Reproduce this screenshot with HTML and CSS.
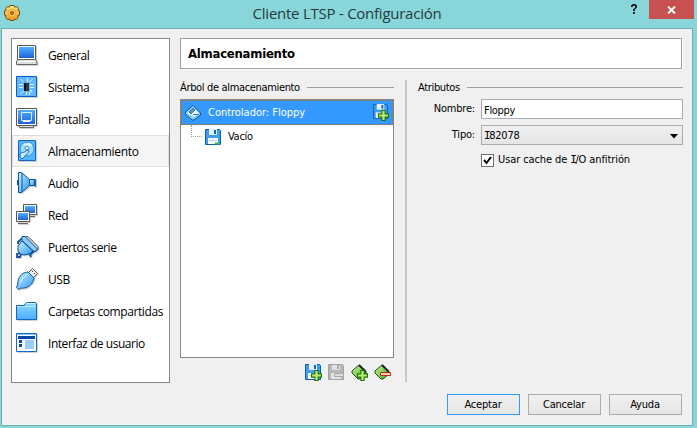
FILE: index.html
```html
<!DOCTYPE html>
<html lang="es">
<head>
<meta charset="utf-8">
<title>Cliente LTSP - Configuración</title>
<link rel="stylesheet" href="styles.css">
</head>
<body>
<svg class="defs" width="0" height="0" aria-hidden="true">
  <defs>
    <linearGradient id="screen" x2="0" y2="1"><stop stop-color="#4eb0ff"/><stop offset="1" stop-color="#1f62dc"/></linearGradient>
    <linearGradient id="sky" x2="1" y2="1"><stop stop-color="#c8f1ff"/><stop offset="1" stop-color="#2d97f3"/></linearGradient>
    <linearGradient id="folder" x2="0" y2="1"><stop stop-color="#8fdcff"/><stop offset="1" stop-color="#48adff"/></linearGradient>
    <linearGradient id="leaf" x2="1" y2="1"><stop stop-color="#c5f59b"/><stop offset="1" stop-color="#3fae1c"/></linearGradient>
    <linearGradient id="gold" x2="0" y2="1"><stop stop-color="#ffe88a"/><stop offset="1" stop-color="#f09a1c"/></linearGradient>
    <symbol id="disk" viewBox="0 0 16 16">
      <path d="M.5.5h14l1 1v14H.5z" fill="#3f9cf0" stroke="#0d5cb4"/>
      <path d="M4 0h8v6H4z" fill="#e2f1fd"/><path d="M9 1h2v4H9z" fill="#1763b5"/>
      <path d="M3 9h10v6H3z" fill="#f4faff"/><path d="M4 11.500h8" stroke="#b3d5ef"/>
    </symbol>
    <symbol id="plus" viewBox="0 0 10 10">
      <path d="M3.500.5h3v3h3v3h-3v3h-3v-3h-3v-3h3z" fill="#b9ee75" stroke="#23720d"/>
    </symbol>
  </defs>
</svg>
<div class="window">
  <header class="titlebar">
    <svg class="gear" width="16" height="16" viewBox="0 0 16 16"><path d="M6 .5h4l.6 1.600 2-.6 1.800 2-.6 2L15.500 6v4l-1.900.8.6 2-1.800 1.700-2-.6-.7 1.600H6.300l-.8-1.600-2.200.5L1.600 12.600l.6-1.800L.5 10V6l1.700-.7-.5-2 1.700-1.700 2 .6z" fill="url(#gold)" stroke="#7a460e" stroke-linejoin="round"/><circle cx="8" cy="8" r="4" fill="#fbc850" stroke="#e39a28" stroke-width=".8"/><circle cx="8" cy="8" r="1.700" fill="#a8762b" stroke="#8a4d0a" stroke-width=".7"/></svg>
    <h1><span>Cliente LTSP - Configuración</span></h1>
    <svg class="help" width="8" height="11" viewBox="0 0 8 11"><path d="M0 1h1V0h4v1h1v3H5v1H4v2H2V5h1V4h1V2H2v1H0zM2 8h2v2H2z" fill="#26292b"/></svg>
    <button class="close" aria-label="Cerrar"><svg width="9" height="8" viewBox="0 0 9 8"><path d="M1 .5l7 7M8 .5l-7 7" stroke="#fff" stroke-width="1.900"/></svg></button>
  </header>
  <main class="client">
    <div class="content">
      <nav class="sidebar">
        <a class="item"><svg width="24" height="24" viewBox="0 0 24 24"><path d="M2.500 2.500h18v14h-18z" fill="#fff" stroke="#555"/><path d="M4 4h15v11H4z" fill="url(#screen)"/><path d="M2.500 16.500h18l1.500 2.500v2.500H1.500V19z" fill="#ddd" stroke="#666"/><path d="M3 18.500h17" stroke="#fff"/></svg><span>General</span></a>
        <a class="item"><svg width="24" height="24" viewBox="0 0 24 24"><path d="M1.500 1.500h20v20h-20z" fill="#62b7fc" stroke="#0862bd"/><path d="M9 8h5v8H9z" fill="#303840"/><path d="M9 8h2v8H9z" fill="#111"/><path d="M4 9.500h4M4 12.500h4M15 9.500h4M15 12.500h4M15 15.500h2M5.500 4l3 3M17.500 4l-3 3M12.500 3v4M5.500 19l3-3M11.500 17v3M14.500 17v3M17.500 18l-2-2" stroke="#e2f4ff"/></svg><span>Sistema</span></a>
        <a class="item"><svg width="24" height="24" viewBox="0 0 24 24"><path d="M1.500 1.500h20v17h-20z" fill="#fff" stroke="#555"/><path d="M3 3h17v14H3z" fill="url(#screen)"/><path d="M6.500 5.500h10v8h-10z" fill="none" stroke="#d9f1ff"/><path d="M8 14.500h7" stroke="#fff"/><path d="M4.500 19v1.500h14V19" fill="#ddd" stroke="#666"/></svg><span>Pantalla</span></a>
        <a class="item selected"><svg width="24" height="24" viewBox="0 0 24 24"><path d="M3.500 1.500h17v20h-17z" fill="#50b5ff" stroke="#1768c2"/><circle cx="12" cy="10" r="7" fill="#9edcff" stroke="#3d8fda"/><path d="M8 5l4 5 5-4-2-2z" fill="#dff5ff"/><circle cx="12" cy="9" r="2" fill="#e6f7ff" stroke="#2e86cf"/><path d="M5 15c2-3 4 0 7-4l2 1c-1 3-3 3-4 5l-3 3-2-2z" fill="#c9edff" stroke="#176abe"/></svg><span>Almacenamiento</span></a>
        <a class="item"><svg width="24" height="24" viewBox="0 0 24 24"><path d="M3.500 1.500h3l8 7v6l-8 7h-3z" fill="url(#sky)" stroke="#0b519c"/><path d="M7 2v19" stroke="#0b519c"/><path d="M14.500 8.500h5v6h-5z" fill="url(#sky)" stroke="#0b519c"/><path d="M2.500 9v5" stroke="#0b519c"/><path d="M20.500 8v8" stroke="#1b66ae"/></svg><span>Audio</span></a>
        <a class="item"><svg width="24" height="24" viewBox="0 0 24 24"><path d="M8.500 1.500h13v10h-13z" fill="#fff" stroke="#555"/><path d="M10 3h10v7H10z" fill="url(#screen)"/><path d="M15 13.500h5" stroke="#666"/><path d="M1.500 8.500h13v10h-13z" fill="#fff" stroke="#555"/><path d="M3 10h10v7H3z" fill="url(#screen)"/><path d="M3 20.500h10" stroke="#666"/></svg><span>Red</span></a>
        <a class="item"><svg width="24" height="24" viewBox="0 0 24 24"><path d="M11 1.500h2l10 10v3l-2 1L9 3z" fill="#ddd" stroke="#555"/><path d="M7 6l11 10-4 3-5 1-4-1-2-3V11z" fill="url(#sky)" stroke="#0c529c"/><path d="M7 1.500h3l12 12-1 3h-2L6.500 5z" fill="#8bcbfa" stroke="#0c529c"/><path d="M7 3.500L3 7v2M5 18l-3 1v3h3l1-3M19 16l-4 4 1 2" fill="none" stroke="#0c529c" stroke-width="1.800"/></svg><span>Puertos serie</span></a>
        <a class="item"><svg width="24" height="24" viewBox="0 0 24 24"><path d="M13.500 5.500l4-4 5 5-4 4z" fill="#eee" stroke="#555"/><path d="M17 4l1 1M19 6l1 1" stroke="#333"/><path d="M13 5c-5 0-9 4-10 9l-.5 4-1 2.500 2 2L6 21c7 1 12-4 13-10z" fill="url(#sky)" stroke="#0a559e"/><path d="M5 16q2-6 8-9" fill="none" stroke="#e0f7ff"/></svg><span>USB</span></a>
        <a class="item"><svg width="24" height="24" viewBox="0 0 24 24"><path d="M1.500 20.500v-14h8v-1l2-2h9l1 1v16z" fill="url(#folder)" stroke="#1267bd"/><path d="M11 4.500h9" stroke="#d9f6ff"/><path d="M2 7.500h19" stroke="#b9ebff"/></svg><span>Carpetas compartidas</span></a>
        <a class="item narrow"><svg width="24" height="24" viewBox="0 0 24 24"><path d="M1.500 2.500h20v18h-20z" fill="#fff" stroke="#106cc6"/><path d="M2 3h19v1H2z" fill="#87c5ff"/><path d="M3 5h17v3H3z" fill="#0848a4"/><path d="M4 9h3v3H4zM4 13h3v3H4z" fill="#0848a4"/><path d="M10 9h9v9h-9z" fill="#9bccff"/></svg><span>Interfaz de usuario</span></a>
      </nav>
      <section class="page">
        <h2 class="heading"><span>Almacenamiento</span></h2>
        <div class="columns">
          <div class="storage">
            <div class="group"><span>Árbol de almacenamiento</span></div>
            <div class="tree">
              <div class="row active">
                <svg width="16" height="16" viewBox="0 0 16 16"><path d="M8 .5L15.500 8v2L9 15H7L.5 9V7z" fill="#8ccbf5" stroke="#0b5197"/><path d="M8 2l6 6-5 4-7-4z" fill="#eefaff"/><path d="M4 7l4-4 2 2-4 4zM8 9.500h6" fill="#4a99d6" stroke="#287ac0"/></svg>
                <span>Controlador: Floppy</span>
                <svg class="add" width="16" height="17" viewBox="0 0 16 17"><use href="#disk" width="15" height="15"/><use href="#plus" x="5" y="6" width="11" height="11"/></svg>
              </div>
              <div class="row child">
                <i class="branch"></i>
                <svg width="16" height="16"><use href="#disk" width="16" height="16"/><path d="M10 14.500h5" stroke="#34c04a" stroke-width="2"/></svg>
                <span class="tight">Vacío</span>
              </div>
            </div>
            <div class="tools">
              <svg width="17" height="17" viewBox="0 0 17 17"><use href="#disk" width="16" height="16"/><use href="#plus" x="6" y="6" width="11" height="11"/></svg>
              <svg width="17" height="17" viewBox="0 0 17 17"><path d="M.5.5h14l1 1v14H.5z" fill="#b7b7b7" stroke="#a2a2a2"/><path d="M4 1h8v5H4zM3 9h10v6H3z" fill="#e2e2e2"/><path d="M9 1h2v4H9z" fill="#aaa"/><path d="M6.500 9.500h9v3h-9z" fill="#ddd" stroke="#aaa"/></svg>
              <svg width="17" height="17" viewBox="0 0 17 17"><path d="M8 1l7 7v2l-6 5H7L1 9V7z" fill="url(#leaf)" stroke="#214d17"/><path d="M8 1l7 7" stroke="#222" stroke-width="2"/><use href="#plus" x="6" y="6" width="11" height="11"/></svg>
              <svg width="17" height="17" viewBox="0 0 17 17"><path d="M8 1l7 7v2l-6 5H7L1 9V7z" fill="url(#leaf)" stroke="#214d17"/><path d="M8 1l7 7" stroke="#222" stroke-width="2"/><path d="M6.500 8.500h10v3h-10z" fill="#ffd3c0" stroke="#c22c0d"/></svg>
            </div>
          </div>
          <div class="divider"></div>
          <form class="attributes">
            <div class="group"><span>Atributos</span></div>
            <div class="field"><label><span>Nombre:</span></label><div class="control input"><span class="tight">Floppy</span></div></div>
            <div class="field"><label><span>Tipo:</span></label><div class="control select"><span class="model"><b>I</b>82078</span><svg width="8" height="5" viewBox="0 0 8 5"><path d="M0 0h8L4 4.500z"/></svg></div></div>
            <div class="check"><i class="box"><svg width="9" height="9" viewBox="0 0 9 9"><path d="M1 4l2.500 3L8 1" fill="none" stroke="#000" stroke-width="2"/></svg></i><span>Usar cache de <b>I</b>/O anfitrión</span></div>
          </form>
        </div>
      </section>
    </div>
    <footer class="actions">
      <button class="default"><span>Aceptar</span></button>
      <button><span>Cancelar</span></button>
      <button><span>Ayuda</span></button>
    </footer>
  </main>
</div>
</body>
</html>
```
FILE: styles.css
```css
* { box-sizing: border-box; }
body { margin: 0; overflow: hidden; background: #88d6da; color: #000; font: 11px/14px "DejaVu Sans Condensed", "DejaVu Sans", sans-serif; font-stretch: condensed; }
span { white-space: nowrap; }
svg { display: block; flex: none; }
/* capital I with serifs */
b { font: 11px/1 "DejaVu Sans Mono", monospace; letter-spacing: -1.5px; }
.defs { position: absolute; }
.window { width: 697px; height: 428px; padding: 0 4px 2px 1px; display: flex; flex-direction: column; }
.titlebar { height: 28px; flex: none; display: grid; grid-template-columns: 29px 1fr 18px 45px; align-items: start; margin-right: -1px; }
.gear { margin: 5px 0 0 3px; }
h1 { margin: 3px 0 0 33px; text-align: center; font: 15px/20px "Open Sans", "Noto Sans", sans-serif; color: #263b3d; letter-spacing: -.25px; }
.help { margin-top: 4px; }
.close { border: 0; height: 19px; width: 45px; padding: 0; background: #c75050; display: flex; align-items: center; justify-content: center; }
.client { height: 398px; width: 692px; border: 1px solid #70b0b3; background: #f0f0f0; padding: 9px 9px 10px 9px; display: flex; flex-direction: column; }
.content { display: flex; height: 345px; gap: 10px; }
.sidebar { width: 159px; border: 1px solid #828790; background: #fff; }
.item { height: 32px; display: flex; align-items: center; gap: 9px; padding-left: 2px; border: 1px solid transparent; font: 12px/16px "Open Sans", "Noto Sans", sans-serif; letter-spacing: -.4px; }
.item svg { filter: drop-shadow(1px 1px 0 rgba(0, 0, 0, .18)); }
.item span { padding-top: 2px; }
.selected { background: #f6f6f6; border-color: #dedede; letter-spacing: -.28px; }
.narrow { letter-spacing: -.46px; }
.page { flex: 1; display: flex; flex-direction: column; }
.heading { height: 31px; margin: 0 1px 0 0; flex: none; border: 1px solid #a0a0a0; box-shadow: 1px 1px #fff; background: #fff; padding: 8px 0 0 7px; font: bold 13px/14px "DejaVu Sans Condensed", "DejaVu Sans", sans-serif; letter-spacing: -.25px; }
.columns { display: flex; flex: 1; padding-top: 11px; }
.storage { width: 214px; display: flex; flex-direction: column; }
.group { height: 14px; display: flex; align-items: center; gap: 7px; letter-spacing: -.34px; }
.group span { padding-top: 1px; }
.group::after { content: ""; flex: 1; height: 1px; background: #a0a0a0; }
.tree { margin-top: 5px; height: 259px; border: 1px solid #828790; background: #fff; }
.row { height: 24px; display: flex; align-items: center; }
.active { height: 25px; background: #3399ff; border: 1px dotted #cc6600; color: #fff; padding: 0 3px; gap: 7px; letter-spacing: -.02px; }
.add { margin-left: auto; }
.child { padding-left: 10px; height: 22px; }
.branch { width: 11px; height: 12px; margin: -10px 3px 0 0; border: dotted #a0a0a0; border-width: 0 0 1px 1px; }
.child svg { margin-top: 1px; }
.child span { margin: 1px 0 0 7px; }
.tight { letter-spacing: -.3px; }
.tools { display: flex; gap: 6px; justify-content: flex-end; padding: 6px 3px 0 0; }
.divider { width: 2px; height: 302px; margin: 0 11px 0 11px; background: #c6c6c6; }
.attributes { flex: 1; }
.field { display: flex; margin-top: 6px; height: 20px; }
.group + .field { margin-top: 5px; }
label { width: 63px; padding: 3px 6px 0 0; text-align: right; display: flex; justify-content: flex-end; letter-spacing: -.2px; }
.control { flex: 1; border: 1px solid #abadb3; background: #fff; display: flex; padding: 3px 2px 0; }
.input { padding-top: 4px; }
.select { border-color: #acacac; background: linear-gradient(#f0f0f0, #e5e5e5); justify-content: space-between; }
.model { letter-spacing: -.2px; }
.select svg { margin: 5px 2px 0 0; }
.check { display: flex; gap: 4px; align-items: center; margin: 8px 0 0 63px; letter-spacing: -.1px; }
.box { width: 13px; height: 13px; border: 1px solid #707070; background: #fff; padding: 1px; }
.actions { display: flex; justify-content: flex-end; gap: 8px; margin: 11px 1px 0 0; }
.actions button { width: 73px; height: 21px; padding: 1px 1px 0 0; border: 1px solid #acacac; background: linear-gradient(#f0f0f0, #e5e5e5); font: inherit; letter-spacing: -.2px; display: flex; align-items: center; justify-content: center; }
.actions .default { border-color: #3399ff; }
```
